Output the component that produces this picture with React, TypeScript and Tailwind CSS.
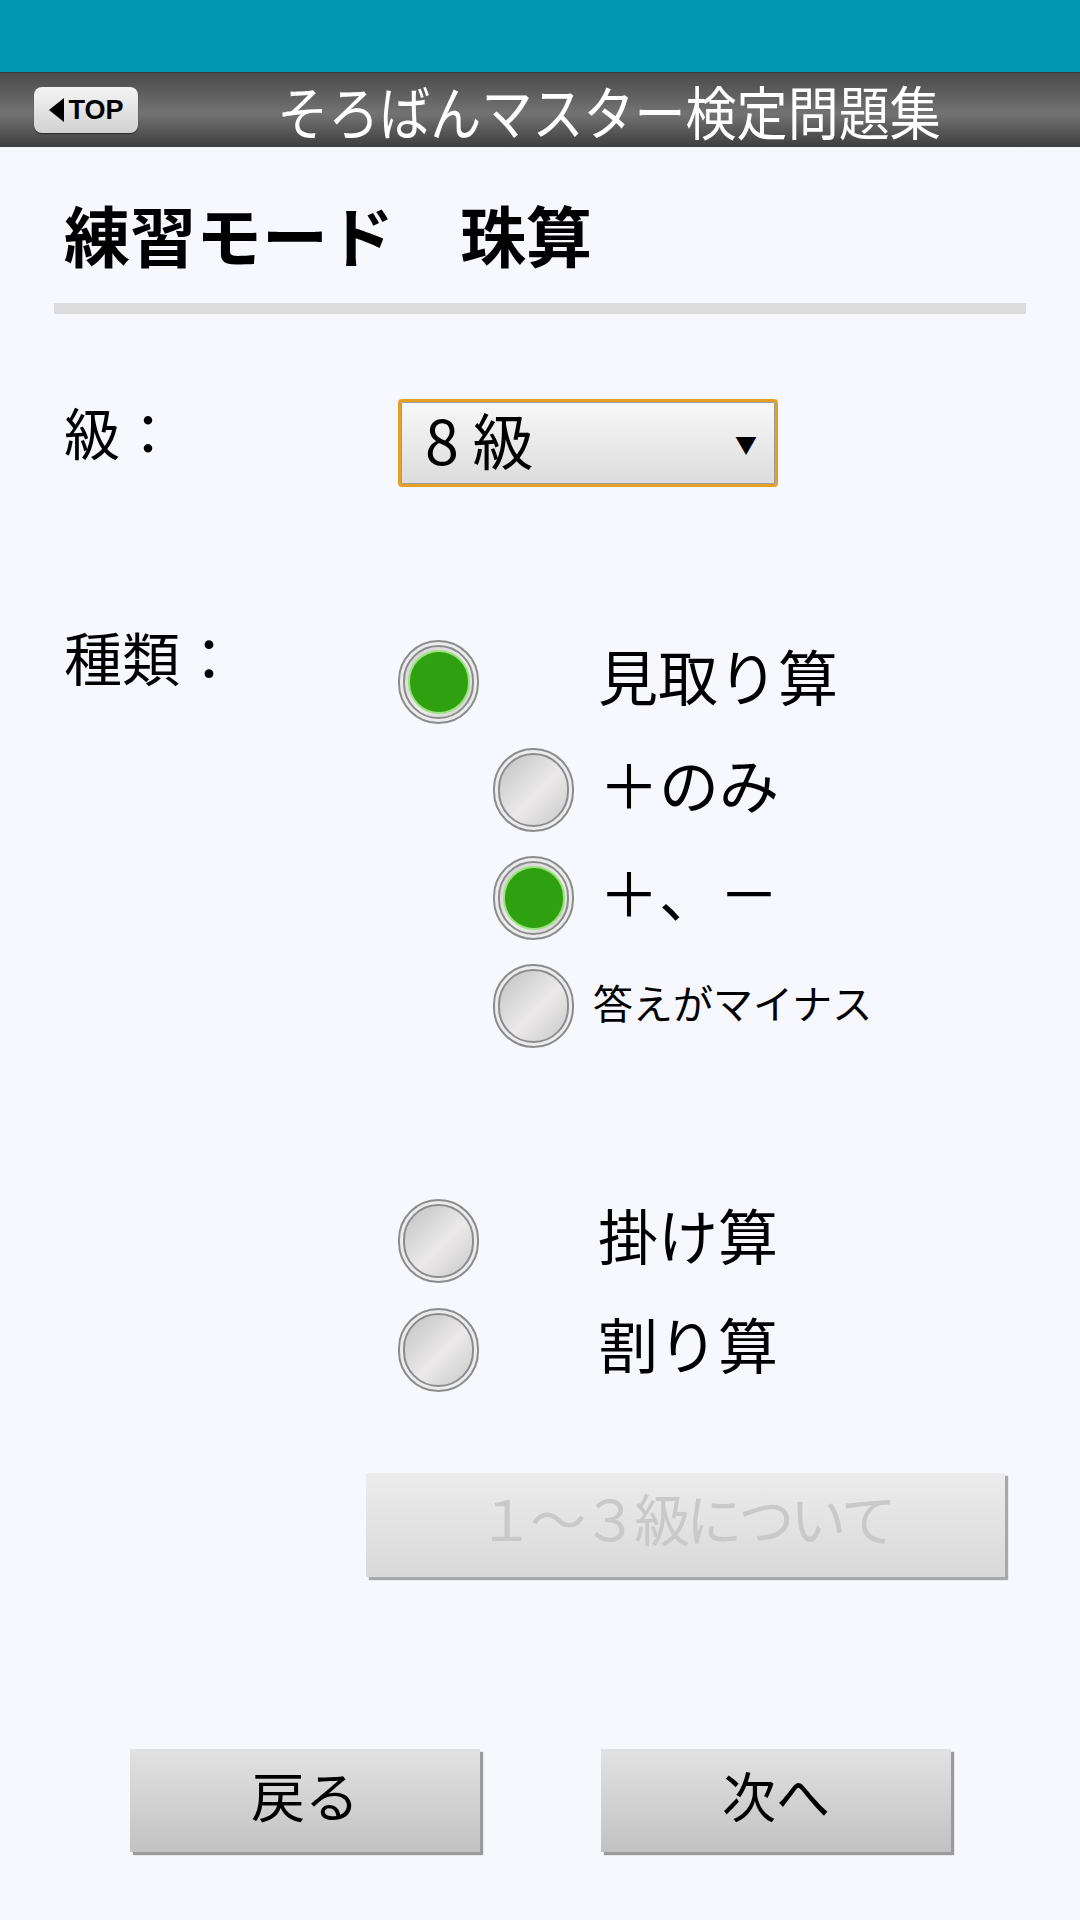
import type { ReactNode } from "react";

const Radio = ({ checked = false }: { checked?: boolean }) => (
  <div className="h-[84px] w-[81px] shrink-0 rounded-full border-2 border-[#8c8c8c] bg-[#ececec] p-[3px]">
    <div
      className={
        checked
          ? "flex h-full w-full items-center justify-center rounded-full border-2 border-[#8c8c8c] bg-[linear-gradient(135deg,#cfcdcd,#eeeded_55%,#cfcfcf)]"
          : "h-full w-full rounded-full border-2 border-[#8c8c8c] bg-[linear-gradient(135deg,#c2c2c2,#ebe9e9_55%,#cacaca)]"
      }
    >
      {checked && (
        <div className="h-[60px] w-[58px] rounded-full bg-[#2fa010] shadow-[0_0_0_2px_#9be37c]" />
      )}
    </div>
  </div>
);

const Option = ({
  checked,
  children,
  gap,
}: {
  checked?: boolean;
  children: ReactNode;
  gap: string;
}) => (
  <div className={`flex items-center ${gap}`}>
    <Radio checked={checked} />
    {children}
  </div>
);

const GrayButton = ({ label }: { label: string }) => (
  <button className="flex h-[103px] w-[350px] items-center justify-center bg-[linear-gradient(to_bottom,#e3e2e2,#c2c2c2)] pb-[12px] text-[54px] leading-none text-black shadow-[3px_3px_1px_#9b9b9b]">
    {label}
  </button>
);

export default function App() {
  return (
    <div className="min-h-[1920px] w-[1080px] bg-[#f7f8fd] font-['Noto_Sans_CJK_JP',sans-serif] text-black">
      <div className="h-[72px] bg-[#0095b1]" />

      <header className="flex h-[75px] items-center border-t border-[#3a3a3a] bg-[linear-gradient(to_bottom,#4a4a4a,#737373_55%,#3e3e3e)]">
        <button className="ml-[34px] flex h-[46px] w-[104px] items-center justify-center gap-[3px] rounded-[8px] bg-[linear-gradient(to_bottom,#f4f4f4,#d2d2d2)] shadow-[0_1px_1px_#2a2a2a]">
          <svg width="17" height="26" viewBox="0 0 17 26">
            <path d="M16 1 L1 13 L16 25 Z" fill="#000" />
          </svg>
          <span className="font-['Liberation_Sans',sans-serif] text-[27px] font-bold leading-none">
            TOP
          </span>
        </button>
        <div className="flex flex-1 justify-center">
          <h1 className="scale-x-[0.88] whitespace-nowrap text-[58px] leading-none text-white">
            そろばんマスター検定問題集
          </h1>
        </div>
      </header>

      <main className="flex flex-col px-[54px]">
        <h2 className="mt-[53px] pl-[10px] text-[66px] font-bold leading-none">
          練習モード　珠算
        </h2>
        <div className="mt-[37px] h-[11px] bg-[#dcdcdc]" />

        <div className="mt-[85px] flex items-start pl-[10px]">
          <span className="mt-[4px] w-[334px] text-[56px] leading-none">級：</span>
          <div className="flex h-[88px] w-[380px] items-center justify-between rounded-[4px] border-[3px] border-[#e3a027] bg-[linear-gradient(to_bottom,#f8f8f8,#dcdcdc)] pl-[24px] pr-[18px] shadow-[inset_0_0_0_1px_#9c9c9c]">
            <span className="pb-[10px] text-[61px] leading-none">8 級</span>
            <span className="text-[22px] leading-none">▼</span>
          </div>
        </div>

        <div className="mt-[153px] flex items-start pl-[10px]">
          <span className="mt-[-13px] w-[334px] text-[58px] leading-none">種類：</span>
          <div className="flex flex-col">
            <Option checked gap="gap-[119px]">
              <span className="pb-[14px] text-[60px] leading-none">見取り算</span>
            </Option>
            <div className="ml-[95px] mt-[24px] flex flex-col gap-[24px]">
              <Option gap="gap-[25px]">
                <span className="pb-[14px] text-[60px] leading-none">＋のみ</span>
              </Option>
              <Option checked gap="gap-[25px]">
                <span className="pb-[14px] text-[60px] leading-none">＋、－</span>
              </Option>
              <Option gap="gap-[19px]">
                <span className="pb-[8px] text-[40px] leading-none">答えがマイナス</span>
              </Option>
            </div>
            <div className="mt-[151px] flex flex-col gap-[25px]">
              <Option gap="gap-[119px]">
                <span className="pb-[14px] text-[60px] leading-none">掛け算</span>
              </Option>
              <Option gap="gap-[119px]">
                <span className="pb-[14px] text-[60px] leading-none">割り算</span>
              </Option>
            </div>
          </div>
        </div>

        <button
          disabled
          className="ml-[312px] mt-[81px] flex h-[104px] w-[639px] items-center justify-center bg-[linear-gradient(to_bottom,#ececec,#d9d9d9)] pb-[16px] text-[56px] leading-none tracking-[-4px] text-[#c9c9c9] shadow-[3px_3px_1px_#a8a8a8]"
        >
          １～３級について
        </button>

        <div className="mt-[172px] flex gap-[121px] pl-[76px]">
          <GrayButton label="戻る" />
          <GrayButton label="次へ" />
        </div>
      </main>
    </div>
  );
}
